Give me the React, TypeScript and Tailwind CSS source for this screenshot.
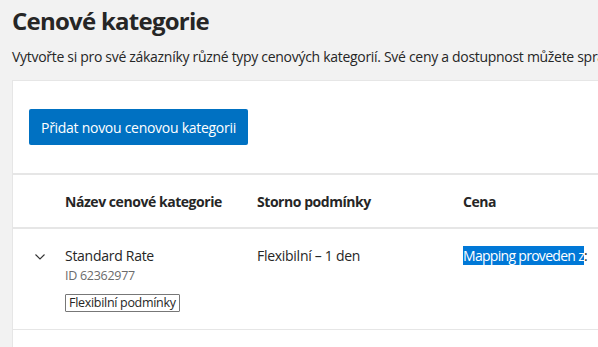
const FONT = 'font-["Segoe_UI","Open_Sans","Noto_Sans",sans-serif]';

// Table columns: expand toggle | name | cancellation | price
const COLS = 'grid grid-cols-[52px_192px_206px_1fr]';

export default function App() {
  return (
    <div className={`${FONT} w-[598px] h-[347px] overflow-hidden flex flex-col bg-[#f2f2f2] text-[#262626]`}>
      <div className="px-3 pt-[5px]">
        <h1 className="text-[24px] leading-[32px] font-bold tracking-[-0.75px]">Cenové kategorie</h1>
        <p className="mt-[10px] text-[14px] leading-[20px] tracking-[-0.3px] whitespace-nowrap">
          Vytvořte si pro své zákazníky různé typy cenových kategorií. Své ceny a dostupnost můžete spravovat.
        </p>
      </div>

      <div className="flex-1 ml-3 mt-[13px] w-[640px] bg-white border-t border-l border-[#e6e6e6] tracking-[-0.28px]">
        {/* Actions */}
        <div className="pl-4 pt-[28px] pb-[28px] border-b-2 border-[#e6e6e6]">
          <button className="h-[36px] px-3 rounded-[2px] bg-[#0071c2] text-white text-[14px]">
            Přidat novou cenovou kategorii
          </button>
        </div>

        {/* Header */}
        <div className={`${COLS} h-[54px] items-center border-b-2 border-[#e6e6e6] text-[14px] font-bold tracking-[-0.45px]`}>
          <div />
          <div>Název cenové kategorie</div>
          <div>Storno podmínky</div>
          <div>Cena</div>
        </div>

        {/* Row */}
        <div className={`${COLS} pt-[17px] h-[101px] border-b border-[#e6e6e6] text-[14px] leading-[20px]`}>
          <div className="flex justify-center pt-[8px] pl-[1px]">
            <svg width="10" height="6" viewBox="0 0 10 6" fill="none">
              <path d="M0.5 0.5 L5 5 L9.5 0.5" stroke="#333" strokeWidth="1.1" />
            </svg>
          </div>
          <div>
            <div>Standard Rate</div>
            <div className="text-[12.5px] leading-[19px] text-[#6b6b6b]">ID 62362977</div>
            <div className="mt-[9px] flex">
              <span className="border border-[#777] rounded-[1px] px-[3px] text-[12.5px] leading-[16px] tracking-[-0.3px]">
                Flexibilní podmínky
              </span>
            </div>
          </div>
          <div>Flexibilní – 1 den</div>
          <div className="whitespace-nowrap tracking-[-0.7px]">
            <span className="bg-[#0078d7] text-white">Mapping proveden z</span>:
          </div>
        </div>
      </div>
    </div>
  );
}
